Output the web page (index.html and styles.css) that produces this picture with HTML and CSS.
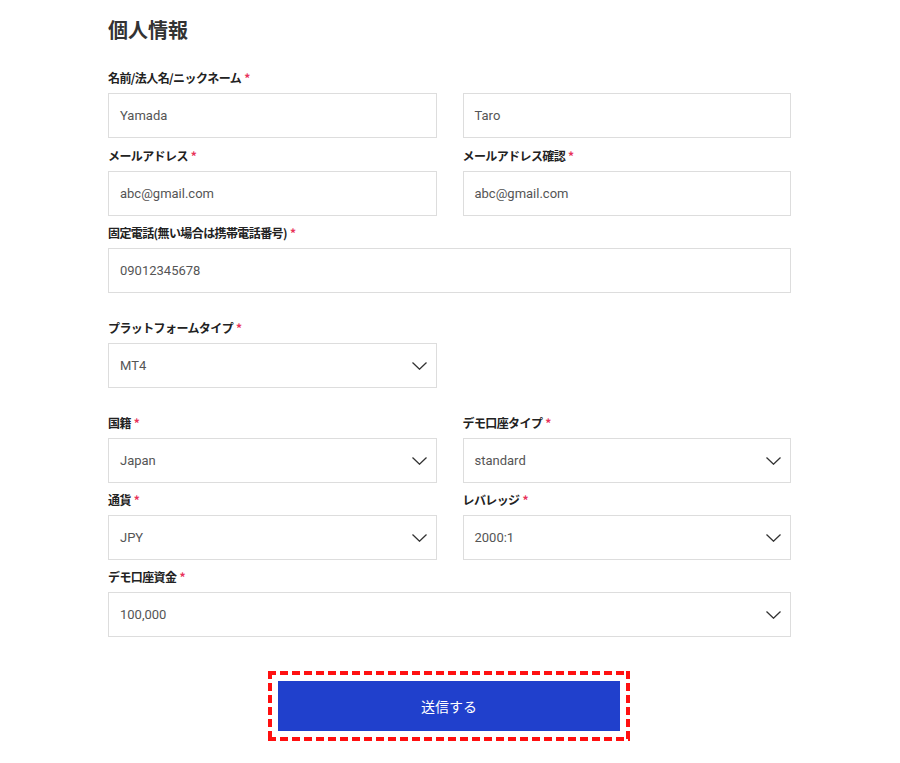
FILE: index.html
```html
<!DOCTYPE html>
<html lang="ja">
<head>
<meta charset="utf-8">
<link rel="stylesheet" href="styles.css">
</head>
<body>
<main class="page">
  <h2 class="title">個人情報</h2>
  <form class="form">
    <div class="grid">
      <div class="field span2">
        <div class="label">名前/法人名/ニックネーム<span class="req">*</span></div>
        <div class="pair">
          <div class="input">Yamada</div>
          <div class="input">Taro</div>
        </div>
      </div>
      <div class="field">
        <div class="label">メールアドレス<span class="req">*</span></div>
        <div class="input">abc@gmail.com</div>
      </div>
      <div class="field">
        <div class="label">メールアドレス確認<span class="req">*</span></div>
        <div class="input">abc@gmail.com</div>
      </div>
      <div class="field span2 tight">
        <div class="label">固定電話(無い場合は携帯電話番号)<span class="req">*</span></div>
        <div class="input">09012345678</div>
      </div>
      <div class="field section">
        <div class="label">プラットフォームタイプ<span class="req">*</span></div>
        <div class="input select">MT4<svg class="chev" viewBox="0 0 15 8"><path d="M0.5 0.5 L7.5 7.2 L14.5 0.5"/></svg></div>
      </div>
      <div class="field section first">
        <div class="label">国籍<span class="req">*</span></div>
        <div class="input select">Japan<svg class="chev" viewBox="0 0 15 8"><path d="M0.5 0.5 L7.5 7.2 L14.5 0.5"/></svg></div>
      </div>
      <div class="field section">
        <div class="label">デモ口座タイプ<span class="req">*</span></div>
        <div class="input select">standard<svg class="chev" viewBox="0 0 15 8"><path d="M0.5 0.5 L7.5 7.2 L14.5 0.5"/></svg></div>
      </div>
      <div class="field tight">
        <div class="label">通貨<span class="req">*</span></div>
        <div class="input select">JPY<svg class="chev" viewBox="0 0 15 8"><path d="M0.5 0.5 L7.5 7.2 L14.5 0.5"/></svg></div>
      </div>
      <div class="field tight">
        <div class="label">レバレッジ<span class="req">*</span></div>
        <div class="input select">2000:1<svg class="chev" viewBox="0 0 15 8"><path d="M0.5 0.5 L7.5 7.2 L14.5 0.5"/></svg></div>
      </div>
      <div class="field span2 tight">
        <div class="label">デモ口座資金<span class="req">*</span></div>
        <div class="input select">100,000<svg class="chev" viewBox="0 0 15 8"><path d="M0.5 0.5 L7.5 7.2 L14.5 0.5"/></svg></div>
      </div>
    </div>
    <div class="submit-wrap">
      <div class="highlight">
        <button type="button" class="submit">送信する</button>
      </div>
    </div>
  </form>
</main>
</body>
</html>
```

FILE: styles.css
```css
* { box-sizing: border-box; }
html, body { margin: 0; padding: 0; background: #fff; }
body {
  font-family: Roboto, "Noto Sans CJK JP", sans-serif;
  color: #333;
}
.page {
  width: 683px;
  margin-left: 108px;
  padding-top: 16px;
}
.title {
  margin: 0;
  font-family: "Noto Sans CJK JP", sans-serif;
  font-size: 20px;
  line-height: 28px;
  font-weight: 700;
  color: #333;
}
.form { margin-top: 26px; }
.grid {
  display: grid;
  grid-template-columns: 1fr 1fr;
  column-gap: 26px;
}
.field { margin-bottom: 10px; }
.span2 { grid-column: 1 / span 2; }
.section { margin-top: 17px; }
.first { grid-column: 1; }
.tight { margin-top: -1px; }
.pair {
  display: grid;
  grid-template-columns: 1fr 1fr;
  column-gap: 26px;
}
.label {
  font-family: "Noto Sans CJK JP", sans-serif;
  font-size: 12px;
  line-height: 16px;
  font-weight: 700;
  color: #222;
  margin-bottom: 7px;
  letter-spacing: -0.6px;
}
.req {
  color: #e8335a;
  margin-left: 3px;
  font-weight: 700;
}
.input {
  height: 45px;
  border: 1px solid #dddddd;
  padding: 0 11px;
  display: flex;
  align-items: center;
  font-family: Roboto, sans-serif;
  font-size: 13px;
  color: #555;
  background: #fff;
}
.select { justify-content: space-between; padding-right: 9px; }
.chev {
  width: 15px;
  height: 8px;
  fill: none;
  stroke: #333;
  stroke-width: 1.3;
}
.submit-wrap {
  display: flex;
  justify-content: center;
  margin-top: 24px;
}
.highlight {
  padding: 10px;
  margin-left: -1px;
  background:
    linear-gradient(90deg, #ff1010 8px, transparent 8px) left top / 12px 4px repeat-x,
    linear-gradient(90deg, #ff1010 8px, transparent 8px) left bottom / 12px 4px repeat-x,
    linear-gradient(180deg, #ff1010 8px, transparent 8px) left top / 4px 12px repeat-y,
    linear-gradient(180deg, #ff1010 8px, transparent 8px) right top / 4px 12px repeat-y;
}
.submit {
  display: block;
  width: 342px;
  height: 50px;
  border: 0;
  background: #2040cc;
  color: #fff;
  font-family: "Noto Sans CJK JP", sans-serif;
  font-size: 14px;
  cursor: pointer;
}
```
